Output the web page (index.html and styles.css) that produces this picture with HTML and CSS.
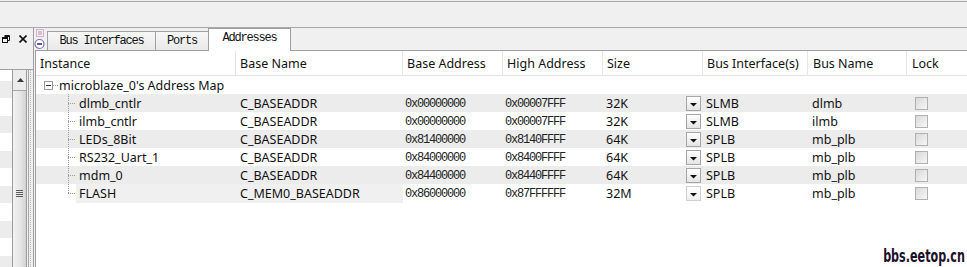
FILE: index.html
```html
<!DOCTYPE html>
<html lang="en">
<head>
    <meta charset="UTF-8">
    <title>Addresses</title>
    <link rel="stylesheet" href="styles.css">
</head>
<body>
    <div class="top"></div>

    <div class="main">
        <div class="side">
            <div class="side-tools">
                <svg width="8" height="8" viewBox="0 0 8 8">
                    <path d="M2.5 0.5h5v5h-2" fill="none" stroke="#111" stroke-width="1"/>
                    <path d="M2.5 1.5h5" stroke="#111" stroke-width="1"/>
                    <rect x="0.5" y="2.5" width="5" height="5" fill="none" stroke="#111"/>
                    <path d="M0.5 3.5h5" stroke="#111" stroke-width="1"/>
                </svg>
                <svg width="8" height="8" viewBox="0 0 8 8">
                    <path d="M0.5 0.5L7.5 7.5M7.5 0.5L0.5 7.5" stroke="#111" stroke-width="1.6"/>
                </svg>
            </div>
            <div class="side-body">
                <div class="side-list"></div>
                <div class="scroll">
                    <div class="scroll-up">
                        <svg width="7" height="4" viewBox="0 0 7 4"><path d="M0 4L3.5 0L7 4z" fill="#3a3a3a"/></svg>
                    </div>
                    <div class="thumb"><span class="grip"></span></div>
                </div>
                <div class="splitter"></div>
            </div>
        </div>

        <div class="content">
            <div class="tabbar">
                <svg class="collapse" width="13" height="22" viewBox="0 0 13 22">
                    <rect x="2.5" y="1.5" width="7" height="7" fill="#f4eef2" stroke="#c9b8c6"/>
                    <path d="M4 4h4M4 6h4" stroke="#c48aa8" stroke-width="1"/>
                    <circle cx="5.5" cy="16" r="4.5" fill="#fff" stroke="#7a6fb4" stroke-width="1.2"/>
                    <path d="M3 16h5" stroke="#3a2e6e" stroke-width="1.6"/>
                </svg>
                <div class="tab wide">Bus Interfaces</div>
                <div class="tab">Ports</div>
                <div class="tab active">Addresses</div>
            </div>

            <div class="panel">
                <div class="row head">
                    <div>Instance</div>
                    <div>Base Name</div>
                    <div>Base Address</div>
                    <div>High Address</div>
                    <div>Size</div>
                    <div>Bus Interface(s)</div>
                    <div class="pl5">Bus Name</div>
                    <div class="pl5">Lock</div>
                </div>

                <div class="row root">
                    <div class="inst">
                        <span class="minus"></span>
                        <span class="stub"></span>
                        <span>microblaze_0's Address Map</span>
                    </div>
                </div>

                <div class="row alt">
                    <div class="inst"><span class="branch"></span><span class="label">dlmb_cntlr</span></div>
                    <div class="name">C_BASEADDR</div>
                    <div class="mono">0x00000000</div>
                    <div class="mono">0x00007FFF</div>
                    <div class="size">32K<span class="drop"><svg width="13" height="13" viewBox="0 0 13 13"><path d="M3 6h7l-3.5 3.5z" fill="#111"/></svg></span></div>
                    <div class="bus">SLMB</div>
                    <div class="busname">dlmb</div>
                    <div class="lock"><span class="check"></span></div>
                </div>

                <div class="row">
                    <div class="inst"><span class="branch"></span><span class="label">ilmb_cntlr</span></div>
                    <div class="name">C_BASEADDR</div>
                    <div class="mono">0x00000000</div>
                    <div class="mono">0x00007FFF</div>
                    <div class="size">32K<span class="drop"><svg width="13" height="13" viewBox="0 0 13 13"><path d="M3 6h7l-3.5 3.5z" fill="#111"/></svg></span></div>
                    <div class="bus">SLMB</div>
                    <div class="busname">ilmb</div>
                    <div class="lock"><span class="check"></span></div>
                </div>

                <div class="row alt">
                    <div class="inst"><span class="branch"></span><span class="label">LEDs_8Bit</span></div>
                    <div class="name">C_BASEADDR</div>
                    <div class="mono">0x81400000</div>
                    <div class="mono">0x8140FFFF</div>
                    <div class="size">64K<span class="drop"><svg width="13" height="13" viewBox="0 0 13 13"><path d="M3 6h7l-3.5 3.5z" fill="#111"/></svg></span></div>
                    <div class="bus">SPLB</div>
                    <div class="busname">mb_plb</div>
                    <div class="lock"><span class="check"></span></div>
                </div>

                <div class="row">
                    <div class="inst"><span class="branch"></span><span class="label">RS232_Uart_1</span></div>
                    <div class="name">C_BASEADDR</div>
                    <div class="mono">0x84000000</div>
                    <div class="mono">0x8400FFFF</div>
                    <div class="size">64K<span class="drop"><svg width="13" height="13" viewBox="0 0 13 13"><path d="M3 6h7l-3.5 3.5z" fill="#111"/></svg></span></div>
                    <div class="bus">SPLB</div>
                    <div class="busname">mb_plb</div>
                    <div class="lock"><span class="check"></span></div>
                </div>

                <div class="row alt">
                    <div class="inst"><span class="branch"></span><span class="label">mdm_0</span></div>
                    <div class="name">C_BASEADDR</div>
                    <div class="mono">0x84400000</div>
                    <div class="mono">0x8440FFFF</div>
                    <div class="size">64K<span class="drop"><svg width="13" height="13" viewBox="0 0 13 13"><path d="M3 6h7l-3.5 3.5z" fill="#111"/></svg></span></div>
                    <div class="bus">SPLB</div>
                    <div class="busname">mb_plb</div>
                    <div class="lock"><span class="check"></span></div>
                </div>

                <div class="row">
                    <div class="inst"><span class="branch last"></span><span class="label hl">FLASH</span></div>
                    <div class="name hl">C_MEM0_BASEADDR</div>
                    <div class="mono">0x86000000</div>
                    <div class="mono">0x87FFFFFF</div>
                    <div class="size">32M<span class="drop flat"><svg width="13" height="13" viewBox="0 0 13 13"><path d="M3 6h7l-3.5 3.5z" fill="#111"/></svg></span></div>
                    <div class="bus">SPLB</div>
                    <div class="busname">mb_plb</div>
                    <div class="lock"><span class="check"></span></div>
                </div>
            </div>
        </div>
    </div>

    <div class="mark">bbs.eetop.cn</div>
</body>
</html>
```

FILE: styles.css
```css
body{
    margin:0;
    width:967px;
    height:267px;
    overflow:hidden;
    position:relative;
    background:#f0f0f0;
    font-family:"Noto Sans",sans-serif;
    font-size:12.5px;
    color:#111;
}
.top{
    height:25px;
    margin-top:1px;
    border-top:1px solid #a9a9a9;
    border-bottom:1px solid #a9a9a9;
}
.main{
    display:flex;
    height:239px;
}

/* left docked panel */
.side{
    width:33px;
    border-right:1px solid #a0a0a0;
    display:flex;
    flex-direction:column;
}
.side-tools{
    height:42px;
    border-bottom:1px solid #a0a0a0;
    display:flex;
    gap:9px;
    padding:7px 0 0 2px;
    box-sizing:border-box;
}
.side-body{
    flex:1;
    display:flex;
}
.side-list{
    width:12px;
    background:repeating-linear-gradient(to bottom,#fff 0 11px,#ececec 11px 28px,#fff 28px 35px);
}
.scroll{
    width:13px;
    border-left:1px solid #9c9c9c;
    border-right:1px solid #9c9c9c;
    background:#ececec;
    display:flex;
    flex-direction:column;
}
.scroll-up{
    height:20px;
    display:flex;
    justify-content:center;
    align-items:center;
    padding-left:1px;
}
.thumb{
    flex:1;
    border-top:1px solid #a8a8a8;
    background:linear-gradient(to right,#f2f2f2,#e4e4e4 60%,#d2d2d2);
    display:flex;
    justify-content:center;
}
.grip{
    width:7px;
    height:7px;
    margin-top:99px;
    background:repeating-linear-gradient(to bottom,#5a5a5a 0 1px,transparent 1px 2px);
}
.splitter{
    flex:1;
    margin-left:1px;
    border-left:1px solid #a4a4a4;
    background:repeating-linear-gradient(to bottom,#b4b4b4 0 1px,transparent 1px 2px) 1px 0/1px 100% no-repeat;
}

/* tabs */
.content{
    flex:1;
    display:flex;
    flex-direction:column;
}
.tabbar{
    height:22px;
    display:flex;
    align-items:flex-end;
}
.collapse{
    flex:none;
    align-self:stretch;
}
.tab{
    box-sizing:border-box;
    width:54px;
    height:19px;
    margin-left:-1px;
    border:1px solid #a0a0a0;
    border-bottom:0;
    background:linear-gradient(#f7f7f7,#e9e9e9);
    font-family:"Liberation Mono",monospace;
    font-size:12px;
    letter-spacing:-1.2px;
    line-height:18px;
    text-align:center;
    color:#111;
}
.tab.wide{
    width:109px;
    margin-left:0;
}
.tab.active{
    width:83px;
    height:23px;
    margin-bottom:-1px;
    line-height:19px;
    background:#fff;
    position:relative;
    z-index:1;
}

/* table */
.panel{
    flex:1;
    margin-left:1px;
    border-top:1px solid #a0a0a0;
    border-left:1px solid #a0a0a0;
    background:#fff;
}
.row{
    display:grid;
    grid-template-columns:200px 167px 100px 100px 100px 105px 99px 1fr;
    height:18px;
    align-items:center;
    white-space:nowrap;
}
.row.alt{
    background:#ececec;
}
.row.head{
    height:24px;
    border-bottom:1px solid #e2e2e2;
    align-items:stretch;
}
.row.head div{
    padding-left:4px;
    border-right:1px solid #e6e6e6;
    line-height:25px;
}
.row.head div:last-child{
    border-right:0;
}
.row.head .pl5{
    padding-left:5px;
}
.inst{
    align-self:stretch;
    display:flex;
    align-items:center;
}
.root .inst{
    padding-left:8px;
}
.minus{
    width:9px;
    height:9px;
    box-sizing:border-box;
    border:1px solid #9c9c9c;
    background:linear-gradient(#333,#333) center/5px 1px no-repeat,#fff;
}
.stub{
    width:5px;
    height:1px;
    margin-right:1px;
    background:repeating-linear-gradient(to right,#999 0 1px,transparent 1px 2px);
}
.branch{
    width:8px;
    align-self:stretch;
    margin-left:32px;
    background:
        repeating-linear-gradient(to bottom,#9a9a9a 0 1px,transparent 1px 2px) left top/1px 100% no-repeat,
        repeating-linear-gradient(to right,#9a9a9a 0 1px,transparent 1px 2px) left center/8px 1px no-repeat;
}
.branch.last{
    background:
        repeating-linear-gradient(to bottom,#9a9a9a 0 1px,transparent 1px 2px) left top/1px 50% no-repeat,
        repeating-linear-gradient(to right,#9a9a9a 0 1px,transparent 1px 2px) left center/8px 1px no-repeat;
}
.label{
    flex:1;
    align-self:stretch;
    padding-left:3px;
    line-height:19px;
}
.hl{
    background:#f0f0f0;
}
.name{
    align-self:stretch;
    line-height:19px;
    padding-left:4px;
}
.mono{
    padding-left:2px;
    font-family:"Liberation Mono",monospace;
    font-size:12px;
    letter-spacing:-1.2px;
    color:#222;
}
.size{
    padding-left:3px;
    display:flex;
    align-items:center;
    justify-content:space-between;
    padding-right:2px;
}
.drop{
    width:15px;
    height:15px;
    box-sizing:border-box;
    border:1px solid #a6a6a6;
    background:linear-gradient(#fefefe,#e4e4e4);
    display:flex;
}
.drop.flat{
    border-color:#d0d0d0;
    background:linear-gradient(#ffffff,#eeeeee);
}
.bus{
    padding-left:3px;
}
.busname{
    padding-left:4px;
}
.lock{
    padding-left:8px;
    display:flex;
}
.check{
    width:13px;
    height:13px;
    box-sizing:border-box;
    border:1px solid #b0b0b0;
    background:linear-gradient(135deg,#d9d9d9,#f7f7f7);
}

.mark{
    position:absolute;
    right:2px;
    top:247px;
    font-family:"DejaVu Sans",sans-serif;
    font-weight:bold;
    font-size:18px;
    line-height:1;
    color:#1e1029;
    transform:scaleX(0.62);
    transform-origin:right center;
}
```
